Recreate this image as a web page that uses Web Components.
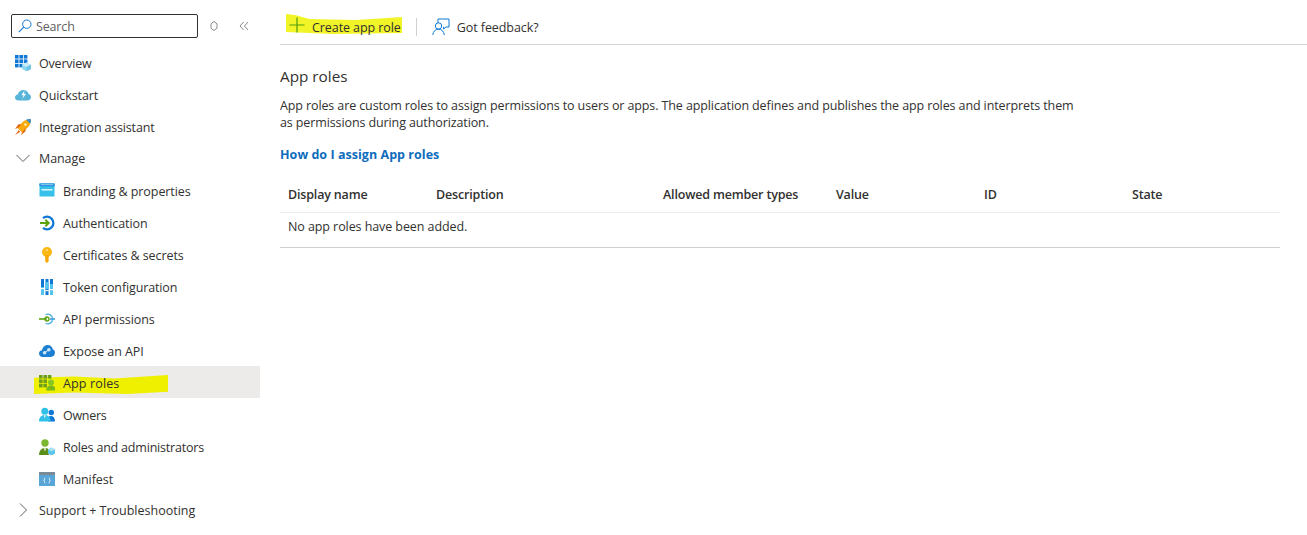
<!DOCTYPE html>
<html lang="en"><head><meta charset="utf-8"><title>App roles</title>
<style>
html,body{margin:0;padding:0;background:#fff}
body{font-family:"Open Sans","Noto Sans",sans-serif;font-size:12.5px;letter-spacing:-.08px;color:#323130;overflow:hidden;height:535px}
</style></head><body>
<app-shell>
  <side-nav slot="nav">
    <nav-item icon="overview" level="0" style="letter-spacing:-.2px">Overview</nav-item>
    <nav-item icon="quick" level="0">Quickstart</nav-item>
    <nav-item icon="rocket" level="0" style="letter-spacing:-.17px">Integration assistant</nav-item>
    <nav-item icon="down" level="0" tight>Manage</nav-item>
    <nav-item icon="brand" level="1">Branding &amp; properties</nav-item>
    <nav-item icon="auth" level="1">Authentication</nav-item>
    <nav-item icon="key" level="1">Certificates &amp; secrets</nav-item>
    <nav-item icon="token" level="1" style="letter-spacing:-.13px">Token configuration</nav-item>
    <nav-item icon="api" level="1">API permissions</nav-item>
    <nav-item icon="expose" level="1">Expose an API</nav-item>
    <nav-item icon="roles" level="1" active style="letter-spacing:.14px">App roles</nav-item>
    <nav-item icon="owners" level="1" style="letter-spacing:-.3px">Owners</nav-item>
    <nav-item icon="admin" level="1" style="letter-spacing:-.2px">Roles and administrators</nav-item>
    <nav-item icon="manifest" level="1">Manifest</nav-item>
    <nav-item icon="right" level="0" tight style="letter-spacing:0">Support + Troubleshooting</nav-item>
  </side-nav>
  <main-pane slot="main"></main-pane>
</app-shell>
<script>
const ICONS={
overview:`<g fill="#0f78d4"><rect x="0" y="0" width="3.6" height="3.6"/><rect x="4.4" y="0" width="3.6" height="3.6"/><rect x="8.8" y="0" width="3.6" height="3.6"/><rect x="0" y="4.4" width="3.6" height="3.6"/><rect x="4.4" y="4.4" width="3.6" height="3.6"/><rect x="8.8" y="4.4" width="3.6" height="3.6"/><rect x="0" y="8.8" width="3.6" height="3.6"/><rect x="4.4" y="8.8" width="3.6" height="3.6"/></g><path d="M11.5 7.500l4.500 2.200v4.400l-4.500 2.200-4.500-2.200V9.700z" fill="#8fd6f2"/><path d="M7 9.700l4.500 2.200 4.500-2.200-4.500-2.200z" fill="#c9ecf9"/><path d="M11.5 11.900v4.400l4.500-2.200V9.700z" fill="#6cc4e8"/>`,
quick:`<path d="M3.600 13.500C1.500 13.500 0 12.200 0 10.400 0 8.800 1.200 7.600 2.800 7.400 3.400 4.700 5.600 3 8.300 3c2.500 0 4.600 1.500 5.200 3.800C15 7.200 16 8.500 16 10.100c0 2-1.600 3.400-3.700 3.400z" fill="#59b4d9"/><path d="M9.600 3.200L6.500 8.200h2.100L7.300 12l3.700-5.200H8.900z" fill="#fff"/>`,
rocket:`<path d="M15.800.2c.3 3-.6 5.800-2.800 8.100l-5.700 5.400-5-5 5.400-5.800C10 .8 12.800-.1 15.800.2z" fill="#f8a90b"/><path d="M15.800.2c.2 1.500 0 3.100-.5 4.500L11.200 .7C12.700.2 14.200 0 15.800.2z" fill="#2f8fd8"/><circle cx="10.400" cy="5.600" r="1.400" fill="#ffe7a8"/><path d="M2.800 8.900L0 10 3.500 5.200h3.200zM7 13.500L6 16.200l4.500-3.900V9.300z" fill="#e3660e"/><path d="M3.800 11L.2 16l5-3.300z" fill="#e3660e"/>`,
brand:`<rect x=".5" y=".5" width="15" height="13" fill="#35c1ea"/><rect x=".5" y=".5" width="15" height="2.700" fill="#0f78d4"/><rect x="1.500" y="1.300" width="13" height="1" fill="#a7e4f6"/><rect x="2.500" y="6" width="11" height="1.600" fill="#d6f3fb"/>`,
auth:`<path d="M4 3.200A6.300 6.300 0 1 1 4 12.800" fill="none" stroke="#0f78d4" stroke-width="2.300"/><path d="M1 8h8.500M6.300 4.700L9.700 8l-3.400 3.300" fill="none" stroke="#5ea30c" stroke-width="2"/>`,
key:`<circle cx="8" cy="5" r="5" fill="#fbb814"/><path d="M6.200 8h3.600v3l-.8.8.8.800v1.400L8 16l-1.800-1.500z" fill="#f5a800"/><circle cx="8" cy="3" r="1.100" fill="#ffe08a"/>`,
token:`<rect x="2" y="0" width="3" height="16" fill="#0f78d4"/><rect x="6.500" y="0" width="3" height="16" fill="#0f78d4"/><rect x="11" y="0" width="3" height="16" fill="#0f78d4"/><rect x="2" y="8" width="3" height="8" fill="#50c4ef"/><rect x="6.500" y="3" width="3" height="7" fill="#50c4ef"/><rect x="11" y="5" width="3" height="11" fill="#50c4ef"/><rect x="2" y="9" width="3" height="1.200" fill="#fff"/><rect x="6.500" y="11" width="3" height="1.200" fill="#fff"/><rect x="11" y="10" width="3" height="1.200" fill="#fff"/>`,
api:`<path d="M0 8h8" stroke="#5ea30c" stroke-width="1.600"/><path d="M11 8h5" stroke="#0f78d4" stroke-width="1.300"/><path d="M6.500 3.800a4.800 4.800 0 1 1 0 8.400" fill="none" stroke="#4ab0dd" stroke-width="1.300"/><circle cx="8" cy="8" r="2" fill="none" stroke="#5ea30c" stroke-width="1.300"/>`,
expose:`<path d="M3.800 14C1.500 14 0 12.500 0 10.600c0-1.800 1.300-3.100 3-3.300C3.500 4.500 5.700 2 8.700 2c2.600 0 4.600 1.700 5.100 4.200 1.300.5 2.200 1.800 2.200 3.400 0 2.500-1.800 4.400-4.200 4.400z" fill="#1b7fd4"/><circle cx="5.600" cy="9.800" r="1.800" fill="#cfe8f8"/><circle cx="9.800" cy="6.800" r="1.800" fill="#cfe8f8"/><path d="M5.600 9.800l4.200-3" stroke="#cfe8f8"/>`,
roles:`<g fill="#6fa01a"><rect x="0" y="0" width="3.600" height="3.600"/><rect x="4.400" y="0" width="3.600" height="3.600"/><rect x="8.800" y="0" width="3.600" height="3.600"/><rect x="0" y="4.400" width="3.600" height="3.600"/><rect x="4.400" y="4.400" width="3.600" height="3.600"/><rect x="0" y="8.800" width="3.600" height="3.600"/><rect x="4.400" y="8.800" width="3.600" height="3.600"/></g><circle cx="12" cy="7.600" r="3" fill="#86c820"/><path d="M7.200 15.500c0-3.300 2-5 4.800-5s4.800 1.700 4.800 5z" fill="#7ab81a"/>`,
owners:`<circle cx="12.300" cy="5.500" r="2.700" fill="#0f78d4"/><path d="M9 14.500h7c0-3.300-1.400-5.400-3.700-5.400-1.300 0-2.400.5-3.100 1.400z" fill="#0f78d4"/><circle cx="5.800" cy="4.300" r="3.500" fill="#32bfe8"/><path d="M0 14.500c0-4 2.200-6.500 5.800-6.500s5.800 2.500 5.800 6.500z" fill="#32bfe8"/><path d="M4.800 8.200h2l-1 3.200z" fill="#fff"/>`,
admin:`<circle cx="6" cy="4" r="3.700" fill="#7cb82f"/><path d="M0 16c0-4.200 2.300-7 6-7 1.500 0 2.800.4 3.800 1.200V16z" fill="#5c8f1a"/><path d="M5 9.200h2l-1 3.600z" fill="#fff"/><path d="M12.500 8.500l3.500 2v4l-3.500 2-3.500-2v-4z" fill="#5cc6ea"/><path d="M9 10.500l3.500 2 3.500-2-3.500-2z" fill="#a8e3f5"/>`,
manifest:`<rect x="0" y="1" width="16" height="14" fill="#59a5d8"/><rect x="0" y="1" width="16" height="3" fill="#7a8a96"/><path d="M6.300 7c-1 0-.8 1-.8 1.600 0 .6-.5.8-.8.9.3.1.8.3.8.900 0 .6-.2 1.600.8 1.600M9.700 7c1 0 .8 1 .8 1.600 0 .6.500.8.800.9-.3.1-.8.3-.8.900 0 .6.2 1.600-.8 1.600" fill="none" stroke="#fff" stroke-width=".8"/>`,
down:`<path d="M1.500 5l6.500 6.500L14.500 5" fill="none" stroke="#605e5c" stroke-width="1"/>`,
right:`<path d="M5 1.500L11.500 8 5 14.500" fill="none" stroke="#605e5c" stroke-width="1"/>`
};
function define(name,html,setup){customElements.define(name,class extends HTMLElement{
  constructor(){super();this.attachShadow({mode:"open"}).innerHTML=html;}
  connectedCallback(){if(setup)setup(this,this.shadowRoot);}
});}
define("app-shell",`<style>:host{display:flex;width:1307px;height:535px;overflow:hidden}
::slotted([slot=nav]){flex:0 0 260px}::slotted([slot=main]){flex:1 1 auto;min-width:0}</style><slot name="nav"></slot><slot name="main"></slot>`);

define("search-box",`<style>:host{display:flex;align-items:center;box-sizing:border-box;width:187px;height:24px;border:1px solid #323130;border-radius:2px;padding-left:6px;gap:4px;color:#605e5c;letter-spacing:-.15px}
svg{display:block;flex:none}</style>
<svg width="14" height="14" viewBox="0 0 14 14"><circle cx="8.800" cy="5.200" r="4.200" fill="none" stroke="#0f78d4"/><path d="M5.700 8.200L.8 13.200" stroke="#0f78d4" stroke-width="1.100"/></svg><span>Search</span>`);

define("side-nav",`<style>:host{display:block;box-sizing:border-box}
.top{display:flex;align-items:center;height:46px;padding:7px 0 0 11px;box-sizing:border-box}
.top search-box{margin-top:-1px}
.btn{display:flex;justify-content:center;align-items:center;flex:none;margin-top:-1px}
svg{display:block}</style>
<div class="top"><search-box></search-box>
<span class="btn" style="width:32px"><svg width="8" height="10" viewBox="0 0 8 10"><path d="M4 .5L7 2.800V7.200L4 9.500 1 7.200V2.800z" fill="none" stroke="#8a8886"/></svg></span>
<span class="btn" style="width:28px"><svg width="10" height="10" viewBox="0 0 10 10"><path d="M4.500 1L1 5l3.500 4M9 1L5.500 5 9 9" fill="none" stroke="#8a8886"/></svg></span></div>
<slot></slot>`);

define("nav-item",`<style>:host{display:block;height:32px;position:relative}
:host([active]){background:#edebe9}
.row{position:relative;display:flex;align-items:center;height:100%;box-sizing:border-box;padding:2px 0 0 15px;white-space:nowrap;color:#323130}
:host([tight]) .row{padding-top:0}
:host([level="1"]) .row{padding-left:39px}
.ic{flex:none;width:16px;height:16px;margin-right:8px;display:block}
.mark{position:absolute;left:34px;top:9px;width:134px;height:19px;background:#eef000;clip-path:polygon(0 14%,30% 8%,60% 18%,100% 0,100% 88%,70% 100%,30% 92%,0 100%)}
</style><div class="mark" hidden></div><div class="row"><svg class="ic" viewBox="0 0 16 16"></svg><slot></slot></div>`,
(el,root)=>{root.querySelector("svg").innerHTML=ICONS[el.getAttribute("icon")]||"";
 if(el.hasAttribute("active"))root.querySelector(".mark").hidden=false;});

define("command-bar",`<style>:host{display:flex;align-items:center;height:34px;padding:10px 0 0 9px;border-bottom:1px solid #d6d6d6;position:relative;white-space:nowrap}
.mark{position:absolute;left:6px;top:14px;width:116px;height:20px;background:#f1f528;clip-path:polygon(0 0,8% 5%,20% 25%,60% 30%,100% 15%,100% 95%,40% 100%,0 90%)}
.item{position:relative;display:flex;align-items:center}
svg{display:block;flex:none}
.sep{position:relative;width:1px;height:18px;background:#d2d0ce;margin:0 15px}
</style><div class="mark"></div>
<span class="item"><svg width="16" height="16" viewBox="0 0 16 16" style="margin-right:7px;position:relative;top:-2px"><path d="M8 .5v15M.5 8h15" stroke="#4f9e0f" stroke-width="1.200" fill="none"/></svg>Create app role</span>
<span class="sep"></span>
<span class="item"><svg width="18" height="18" viewBox="0 0 18 18" style="margin-right:7px"><path d="M6 5V1h11v8h-3l-2.500 2V9H11" fill="none" stroke="#0f78d4"/><circle cx="6.500" cy="8" r="3.200" fill="none" stroke="#0f78d4"/><path d="M.8 17c.3-3.500 2.500-5.800 5.700-5.800S12 13.500 12.300 17" fill="none" stroke="#0f78d4"/></svg>Got feedback?</span>`);

define("roles-table",`<style>:host{display:block}
.g{display:grid;grid-template-columns:148px 227px 173px 148px 148px 1fr;padding-left:8px;align-items:center}
.h{height:35px;border-bottom:1px solid #edebe9;font-weight:600;letter-spacing:-.17px}
.e{border-bottom:1px solid #d2d0ce;padding:5px 0 0 8px;box-sizing:border-box;height:35px;line-height:17px}
</style><div class="g h"><span>Display name</span><span>Description</span><span>Allowed member types</span><span>Value</span><span>ID</span><span>State</span></div>
<div class="e">No app roles have been added.</div>`);

define("main-pane",`<style>:host{display:block;padding-left:20px;box-sizing:border-box}
.body{width:1000px}
h2{font-size:15.3px;font-weight:400;line-height:20px;margin:21px 0 0;color:#323130;letter-spacing:0}
p{margin:11px 0 0;line-height:17px;width:800px;letter-spacing:-.11px}
a{display:block;margin-top:15px;line-height:18px;color:#0f6cbd;font-weight:700;text-decoration:none;letter-spacing:.04px}
roles-table{margin-top:13px}
</style><command-bar></command-bar><div class="body"><h2>App roles</h2>
<p>App roles are custom roles to assign permissions to users or apps. The application defines and publishes the app roles and interprets them as permissions during authorization.</p>
<a href="#">How do I assign App roles</a><roles-table></roles-table></div>`);
</script>
</body></html>
